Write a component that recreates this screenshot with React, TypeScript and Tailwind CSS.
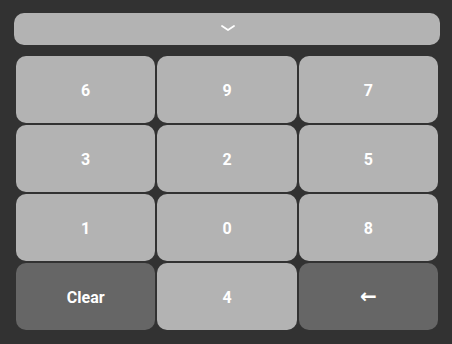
const keys = [
  { label: "6" },
  { label: "9" },
  { label: "7" },
  { label: "3" },
  { label: "2" },
  { label: "5" },
  { label: "1" },
  { label: "0" },
  { label: "8" },
  { label: "Clear", dark: true },
  { label: "4" },
  { label: "←", dark: true, big: true },
];

export default function App() {
  return (
    <div className="w-[452px] h-[344px] bg-[#323232] pl-[14px] pr-[12px] pt-[13px] font-['Roboto',sans-serif]">
      {/* toggle bar */}
      <button className="w-full h-[32px] rounded-[10px] bg-[#b3b3b3] flex items-center justify-center">
        <svg width="16" height="8" viewBox="0 0 16 8" fill="none" className="ml-[2px] -mt-[3px]">
          <path d="M2 2l6 4 6-4" stroke="#fff" strokeWidth="1.8" strokeLinecap="round" strokeLinejoin="round" />
        </svg>
      </button>

      {/* keypad */}
      <div className="mt-[11px] px-[2px] grid grid-cols-3 gap-[2px]">
        {keys.map((k) => (
          <button
            key={k.label}
            className={`h-[67px] rounded-[10px] flex items-center justify-center text-white font-bold ${
              k.big ? "text-[20px] leading-none font-['DejaVu_Sans',sans-serif] pb-[1px]" : "text-[16px] pt-[2px]"
            } ${k.dark ? "bg-[#666666]" : "bg-[#b3b3b3]"}`}
          >
            {k.label}
          </button>
        ))}
      </div>
    </div>
  );
}
